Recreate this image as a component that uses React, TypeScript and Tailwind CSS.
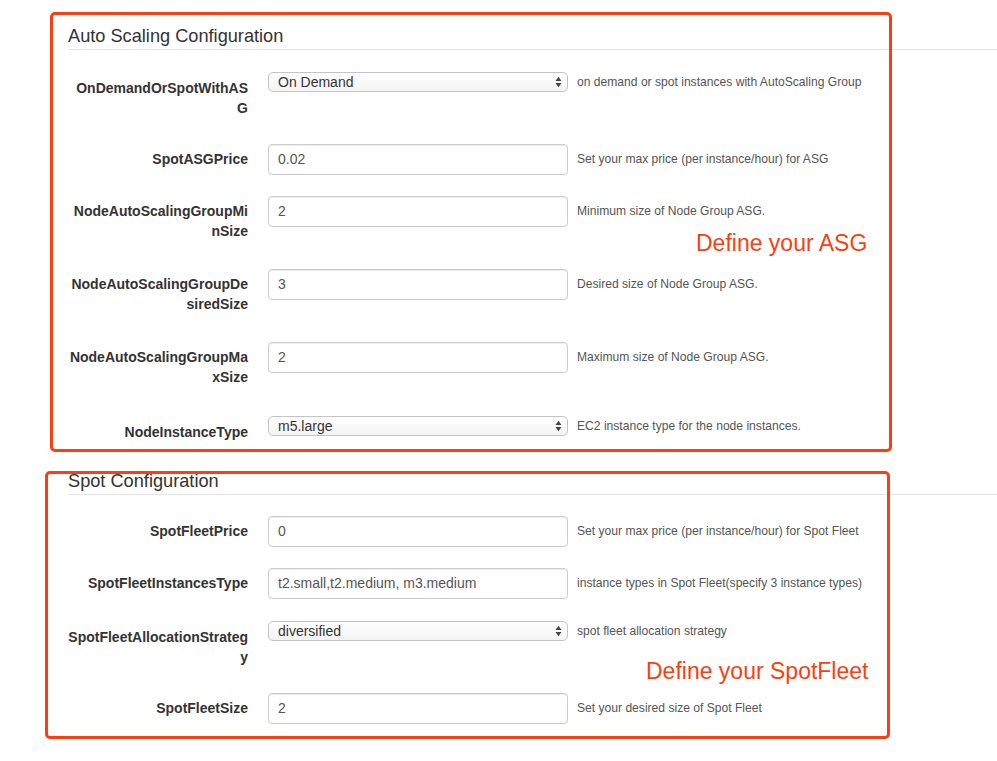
import React from "react";

type Row = {
  label: string[];
  kind: "input" | "select";
  value: string;
  help: string;
  mb: string;
};

const asgRows: Row[] = [
  { label: ["OnDemandOrSpotWithAS", "G"], kind: "select", value: "On Demand", help: "on demand or spot instances with AutoScaling Group", mb: "mb-[26px]" },
  { label: ["SpotASGPrice"], kind: "input", value: "0.02", help: "Set your max price (per instance/hour) for ASG", mb: "mb-[21px]" },
  { label: ["NodeAutoScalingGroupMi", "nSize"], kind: "input", value: "2", help: "Minimum size of Node Group ASG.", mb: "mb-[28px]" },
  { label: ["NodeAutoScalingGroupDe", "siredSize"], kind: "input", value: "3", help: "Desired size of Node Group ASG.", mb: "mb-[28px]" },
  { label: ["NodeAutoScalingGroupMa", "xSize"], kind: "input", value: "2", help: "Maximum size of Node Group ASG.", mb: "mb-[29px]" },
  { label: ["NodeInstanceType"], kind: "select", value: "m5.large", help: "EC2 instance type for the node instances.", mb: "mb-0" },
];

const spotRows: Row[] = [
  { label: ["SpotFleetPrice"], kind: "input", value: "0", help: "Set your max price (per instance/hour) for Spot Fleet", mb: "mb-[21px]" },
  { label: ["SpotFleetInstancesType"], kind: "input", value: "t2.small,t2.medium, m3.medium", help: "instance types in Spot Fleet(specify 3 instance types)", mb: "mb-[22px]" },
  { label: ["SpotFleetAllocationStrateg", "y"], kind: "select", value: "diversified", help: "spot fleet allocation strategy", mb: "mb-[26px]" },
  { label: ["SpotFleetSize"], kind: "input", value: "2", help: "Set your desired size of Spot Fleet", mb: "mb-0" },
];

function Arrows() {
  return (
    <svg width="7" height="12" viewBox="0 0 7 12" className="shrink-0">
      <path d="M0.5 5 L3.5 0.8 L6.5 5 Z" fill="#444" />
      <path d="M0.5 7 L3.5 11.2 L6.5 7 Z" fill="#444" />
    </svg>
  );
}

function FormRow({ row }: { row: Row }) {
  const isSelect = row.kind === "select";
  return (
    <div className={`flex items-start ${row.mb}`}>
      <div
        className={
          isSelect
            ? "w-[180px] shrink-0 text-right font-bold text-[14px] leading-[20px] text-[#333] pt-[6px] whitespace-nowrap"
            : "w-[180px] shrink-0 text-right font-bold text-[14px] leading-[20px] text-[#333] pt-[5px] whitespace-nowrap"
        }
      >
        {row.label.map((l, i) => (
          <div key={i}>{l}</div>
        ))}
      </div>
      {isSelect ? (
        <div className="ml-[20px] w-[300px] h-[20px] shrink-0 flex items-center justify-between rounded-[5px] border border-[#c4c4c4] bg-gradient-to-b from-white to-[#f3f3f3] pl-[9px] pr-[5px] text-[14px] text-[#333]">
          <span className="leading-[18px]">{row.value}</span>
          <Arrows />
        </div>
      ) : (
        <div className="ml-[20px] w-[300px] h-[31px] shrink-0 flex items-center rounded-[4px] border border-[#cccccc] bg-white pl-[9px] text-[14px] text-[#555] shadow-[inset_0_1px_1px_rgba(0,0,0,0.075)]">
          {row.value}
        </div>
      )}
      <div
        className={
          isSelect
            ? "ml-[9px] text-[12.1px] leading-[17px] text-[#555] pt-[1.5px] whitespace-nowrap"
            : "ml-[9px] text-[12.1px] leading-[17px] text-[#555] pt-[6.5px] whitespace-nowrap"
        }
      >
        {row.help}
      </div>
    </div>
  );
}

export default function App() {
  return (
    <div
      className="relative w-full h-[761px] bg-white overflow-hidden"
      style={{ fontFamily: '"Liberation Sans", Arial, Helvetica, sans-serif' }}
    >
      <div className="pl-[68px] pt-[26px]">
        <div className="text-[18.2px] leading-[20px] text-[#333] pb-[3px] border-b border-[#e5e5e5]">
          Auto Scaling Configuration
        </div>
        <div className="mt-[22px]">
          {asgRows.map((r, i) => (
            <FormRow key={i} row={r} />
          ))}
        </div>

        <div className="mt-[29px] text-[18.2px] leading-[20px] text-[#333] pb-[3px] border-b border-[#e5e5e5]">
          Spot Configuration
        </div>
        <div className="mt-[21px]">
          {spotRows.map((r, i) => (
            <FormRow key={i} row={r} />
          ))}
        </div>
      </div>

      {/* annotation overlays */}
      <div className="absolute left-[50px] top-[12px] w-[842px] h-[440px] border-[3px] border-[#fd3d12] rounded-[5px] pointer-events-none" />
      <div className="absolute left-[45px] top-[471px] w-[845px] h-[268px] border-[3px] border-[#fd3d12] rounded-[5px] pointer-events-none" />
      <div className="absolute left-[696px] top-[232px] text-[23px] leading-[23px] text-[#fd3d12] whitespace-nowrap">
        Define your ASG
      </div>
      <div className="absolute left-[646px] top-[660px] text-[23px] leading-[23px] text-[#fd3d12] whitespace-nowrap">
        Define your SpotFleet
      </div>
    </div>
  );
}
